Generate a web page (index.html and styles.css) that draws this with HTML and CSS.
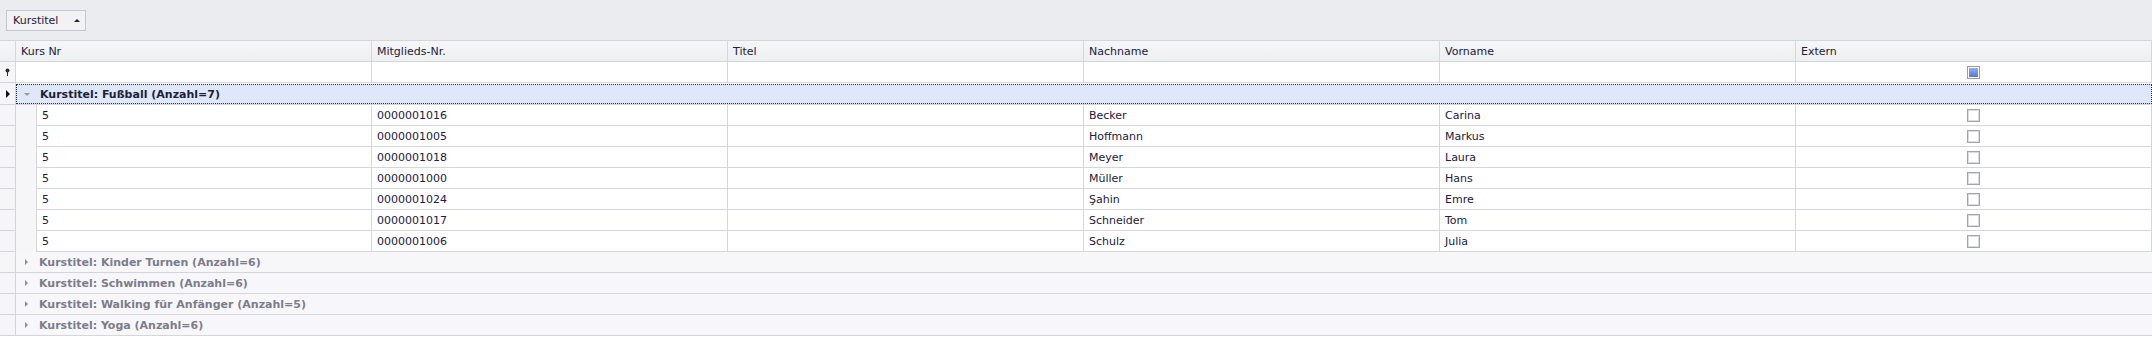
FILE: index.html
```html
<!DOCTYPE html>
<html lang="de">
<head>
  <meta charset="UTF-8" />
  <title>Kursteilnehmer</title>
  <link rel="stylesheet" href="styles.css">
</head>
<body>
  <div class="grid">
    <div class="group-panel">
      <div class="group-btn">Kurstitel <span class="sort-up"></span></div>
    </div>

    <div class="row header">
      <div class="ind"></div>
      <div class="cell">Kurs Nr</div>
      <div class="cell">Mitglieds-Nr.</div>
      <div class="cell">Titel</div>
      <div class="cell">Nachname</div>
      <div class="cell">Vorname</div>
      <div class="cell">Extern</div>
    </div>

    <div class="row filter">
      <div class="ind">
        <svg width="7" height="9" viewBox="0 0 7 9"><circle cx="3.5" cy="2.5" r="2" fill="#2b2b3a"/><rect x="3" y="4" width="1" height="4" fill="#2b2b3a"/></svg>
      </div>
      <div class="cell"></div>
      <div class="cell"></div>
      <div class="cell"></div>
      <div class="cell"></div>
      <div class="cell"></div>
      <div class="cell check-cell"><span class="check filled"></span></div>
    </div>

    <div class="row group focused">
      <div class="ind"><span class="focus-arrow"></span></div>
      <div class="group-label">
        <span class="tri-down"></span>
        Kurstitel: Fußball (Anzahl=7)
      </div>
    </div>

    <div class="row data">
      <div class="ind"></div><div class="indent"></div>
      <div class="cell first">5</div><div class="cell">0000001016</div><div class="cell"></div>
      <div class="cell">Becker</div><div class="cell">Carina</div>
      <div class="cell check-cell"><span class="check"></span></div>
    </div>
    <div class="row data">
      <div class="ind"></div><div class="indent"></div>
      <div class="cell first">5</div><div class="cell">0000001005</div><div class="cell"></div>
      <div class="cell">Hoffmann</div><div class="cell">Markus</div>
      <div class="cell check-cell"><span class="check"></span></div>
    </div>
    <div class="row data">
      <div class="ind"></div><div class="indent"></div>
      <div class="cell first">5</div><div class="cell">0000001018</div><div class="cell"></div>
      <div class="cell">Meyer</div><div class="cell">Laura</div>
      <div class="cell check-cell"><span class="check"></span></div>
    </div>
    <div class="row data">
      <div class="ind"></div><div class="indent"></div>
      <div class="cell first">5</div><div class="cell">0000001000</div><div class="cell"></div>
      <div class="cell">Müller</div><div class="cell">Hans</div>
      <div class="cell check-cell"><span class="check"></span></div>
    </div>
    <div class="row data">
      <div class="ind"></div><div class="indent"></div>
      <div class="cell first">5</div><div class="cell">0000001024</div><div class="cell"></div>
      <div class="cell">Şahin</div><div class="cell">Emre</div>
      <div class="cell check-cell"><span class="check"></span></div>
    </div>
    <div class="row data">
      <div class="ind"></div><div class="indent"></div>
      <div class="cell first">5</div><div class="cell">0000001017</div><div class="cell"></div>
      <div class="cell">Schneider</div><div class="cell">Tom</div>
      <div class="cell check-cell"><span class="check"></span></div>
    </div>
    <div class="row data">
      <div class="ind"></div><div class="indent"></div>
      <div class="cell first">5</div><div class="cell">0000001006</div><div class="cell"></div>
      <div class="cell">Schulz</div><div class="cell">Julia</div>
      <div class="cell check-cell"><span class="check"></span></div>
    </div>

    <div class="row group">
      <div class="ind"></div>
      <div class="group-label"><span class="tri-right"></span>Kurstitel: Kinder Turnen (Anzahl=6)</div>
    </div>
    <div class="row group">
      <div class="ind"></div>
      <div class="group-label"><span class="tri-right"></span>Kurstitel: Schwimmen (Anzahl=6)</div>
    </div>
    <div class="row group">
      <div class="ind"></div>
      <div class="group-label"><span class="tri-right"></span>Kurstitel: Walking für Anfänger (Anzahl=5)</div>
    </div>
    <div class="row group">
      <div class="ind"></div>
      <div class="group-label"><span class="tri-right"></span>Kurstitel: Yoga (Anzahl=6)</div>
    </div>
  </div>
</body>
</html>
```

FILE: styles.css
```css
* {
  box-sizing: border-box;
}

body {
  margin: 0;
  font-family: 'DejaVu Sans', Verdana, sans-serif;
  font-size: 11px;
  color: #20203c;
  background: #ffffff;
}

.grid {
  width: 2152px;
}

.group-panel {
  height: 40px;
  background: #ebecef;
  padding: 10px 0 0 6px;
}

.group-btn {
  display: inline-flex;
  align-items: center;
  width: 80px;
  height: 21px;
  padding-left: 6px;
  border: 1px solid #c6c7cc;
  background: #f2f2f4;
}

.sort-up {
  margin-left: 16px;
  width: 0;
  height: 0;
  border-left: 3px solid transparent;
  border-right: 3px solid transparent;
  border-bottom: 3px solid #1e1e2a;
}

.row {
  display: flex;
  height: 21px;
  border-bottom: 1px solid #d5d6db;
}

.ind {
  flex: 0 0 16px;
  border-right: 1px solid #d5d6db;
  background: #f6f6f8;
  display: flex;
  align-items: center;
  justify-content: center;
}

.cell {
  flex: 0 0 356px;
  border-right: 1px solid #d5d6db;
  padding-left: 5px;
  display: flex;
  align-items: center;
  white-space: nowrap;
}

.cell.first {
  flex-basis: 335px;
}

.indent {
  flex: 0 0 21px;
  background: #f6f6f8;
  border-right: 1px solid #d5d6db;
  margin-bottom: -1px;
}

.header {
  height: 22px;
  border-top: 1px solid #d5d6db;
  background: linear-gradient(#f6f6f7, #eeeff1);
}

.header .ind {
  background: transparent;
}

.filter .cell,
.data .cell {
  background: #ffffff;
}

.check-cell {
  justify-content: center;
  padding-left: 0;
}

.check {
  width: 13px;
  height: 13px;
  border: 1px solid #a3a4ab;
  box-shadow: inset 0 0 0 1px #dcdde1;
  background: #ffffff;
}

.check.filled {
  box-shadow: inset 0 0 0 1px #ffffff;
  background: linear-gradient(#9db3ee, #4e72d0);
  border-color: #9a9ba3;
}

.group {
  background: #f7f7f9;
}

.group .ind {
  background: #f6f6f8;
}

.group-label {
  flex: 1;
  display: flex;
  align-items: center;
  padding-left: 8px;
  font-weight: bold;
  color: #7c7c8c;
  white-space: nowrap;
}

.focused {
  height: 22px;
  background: #ffffff;
}

.focused .group-label {
  background: #dfe8fa;
  color: #1e1e38;
  outline: 1px dotted #2a2a3a;
  outline-offset: -1px;
  margin-top: 1px;
}

.focus-arrow {
  width: 0;
  height: 0;
  border-top: 4px solid transparent;
  border-bottom: 4px solid transparent;
  border-left: 4px solid #101018;
}

.tri-down {
  width: 0;
  height: 0;
  margin-right: 10px;
  border-left: 3px solid transparent;
  border-right: 3px solid transparent;
  border-top: 3px solid #9a9aa6;
}

.tri-right {
  width: 0;
  height: 0;
  margin: 0 11px 0 1px;
  border-top: 3px solid transparent;
  border-bottom: 3px solid transparent;
  border-left: 3px solid #8e8e9a;
}
```
